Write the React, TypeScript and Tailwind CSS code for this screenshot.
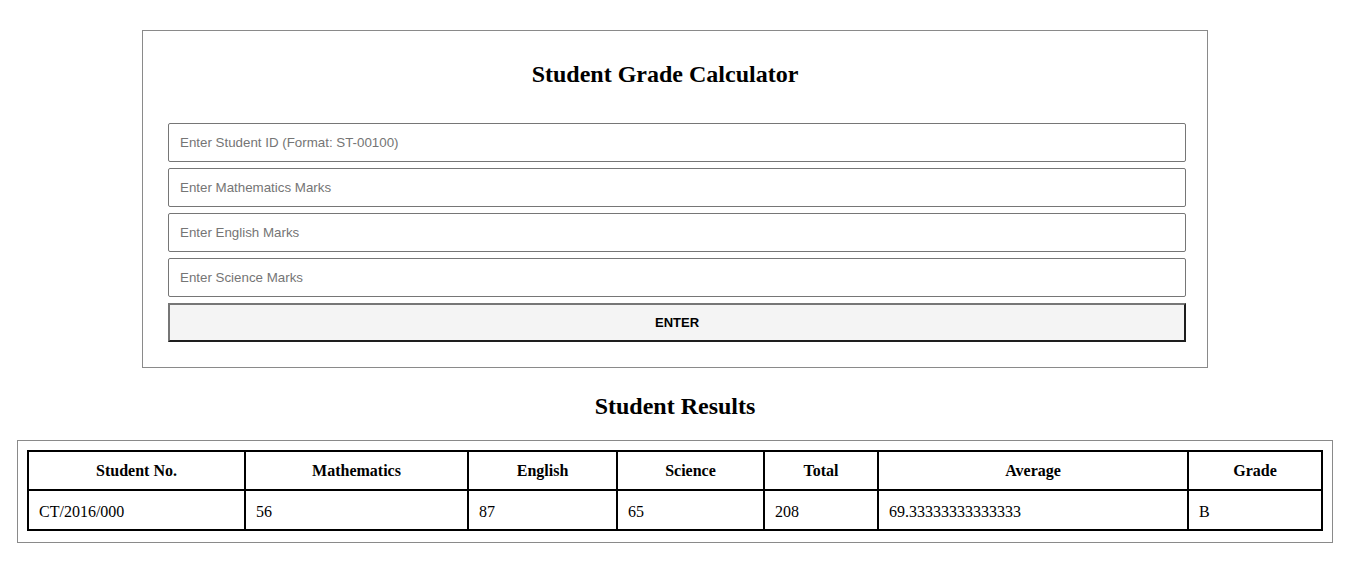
import React from 'react';

const cols = [
  { label: 'Student No.', w: 'w-[217px]', value: 'CT/2016/000' },
  { label: 'Mathematics', w: 'w-[223px]', value: '56' },
  { label: 'English', w: 'w-[149px]', value: '87' },
  { label: 'Science', w: 'w-[147px]', value: '65' },
  { label: 'Total', w: 'w-[114px]', value: '208' },
  { label: 'Average', w: 'w-[310px]', value: '69.33333333333333' },
  { label: 'Grade', w: 'w-[134px]', value: 'B' },
];

const fields = [
  'Enter Student ID (Format: ST-00100)',
  'Enter Mathematics Marks',
  'Enter English Marks',
  'Enter Science Marks',
];

const App = () => {
  return (
    <div className="w-[1350px] bg-white pb-8 font-['Liberation_Serif',serif] text-black">
      {/* calculator form */}
      <div className="mx-auto mt-[30px] w-[1066px] border border-[#8a8a8a] pl-[25px] pr-[21px] pt-[29px] pb-[25px]">
        <h2 className="pr-[24px] text-center text-[24px] leading-[28px] font-bold">Student Grade Calculator</h2>
        <div className="mt-[35px] flex flex-col gap-[6px]">
          {fields.map((f) => (
            <input
              key={f}
              type="text"
              placeholder={f}
              className="h-[39px] w-full rounded-[2px] border border-[#767676] px-[11px] font-['Liberation_Sans',Arial,sans-serif] text-[13.33px] text-black placeholder:text-[#757575] outline-none"
            />
          ))}
          <button className="h-[39px] w-full border-2 border-t-[#767676] border-l-[#767676] border-b-[#1e1e1e] border-r-[#1e1e1e] bg-[#f4f4f4] font-['Liberation_Sans',Arial,sans-serif] text-[13px] font-bold">
            ENTER
          </button>
        </div>
      </div>

      <h2 className="mt-[24px] text-center text-[24px] leading-[28px] font-bold">Student Results</h2>

      {/* results table */}
      <div className="mx-[17px] mt-[20px] border border-[#8a8a8a] pt-[9px] pb-[11px] pl-[9px] pr-[11px]">
        <table className="w-full table-fixed border-collapse">
          <thead>
            <tr>
              {cols.map((c) => (
                <th key={c.label} className={`${c.w} h-[39px] border-2 border-black pt-[1px] text-center text-[16px] font-bold`}>
                  {c.label}
                </th>
              ))}
            </tr>
          </thead>
          <tbody>
            <tr>
              {cols.map((c) => (
                <td key={c.label} className="h-[40px] border-2 border-black px-[10px] pt-[3px] text-left text-[16px]">
                  {c.value}
                </td>
              ))}
            </tr>
          </tbody>
        </table>
      </div>
    </div>
  );
};

export default App;
